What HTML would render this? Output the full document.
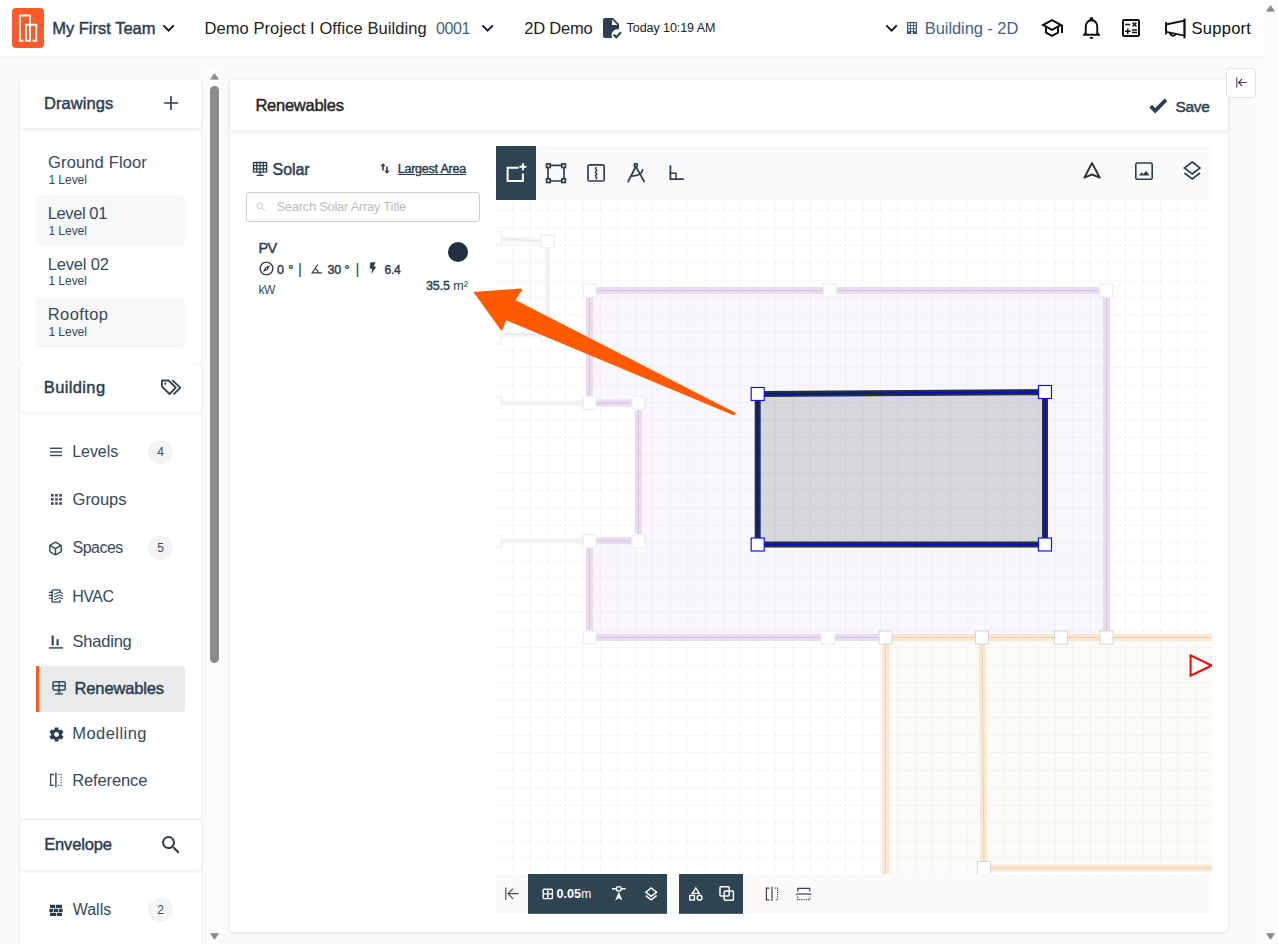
<!DOCTYPE html>
<html>
<head>
<meta charset="utf-8">
<title>Renewables</title>
<style>
*{box-sizing:border-box;margin:0;padding:0}
html,body{width:1278px;height:944px;overflow:hidden;background:#fafafa;font-family:"Liberation Sans",sans-serif;color:#2c3e50}
body{position:relative}
.abs{position:absolute}
.t{position:absolute;white-space:nowrap;line-height:1;font-size:16px;color:#34495e}
.b{font-weight:bold}
svg{position:absolute;display:block;overflow:visible}
/* top bar */
#topbar{position:absolute;left:0;top:0;width:1263px;height:56px;background:#fff;box-shadow:0 1px 2px rgba(0,0,0,.055)}
#logo{position:absolute;left:12px;top:8px;width:32px;height:40px;border-radius:4px;background:#fd5a28}
/* page scrollbar */
#pscroll{position:absolute;left:1263px;top:0;width:15px;height:944px;background:#fcfcfc}
/* sidebar */
.card{position:absolute;background:#fff;border-radius:4px;box-shadow:0 1px 3px rgba(0,0,0,.07)}
.hdr{position:absolute;left:0;width:181px;height:48px;background:#fff;border-radius:4px;box-shadow:0 2px 4px rgba(0,0,0,.08)}
.item{position:absolute;left:16px;width:149px;height:51px;border-radius:4px}
.item.alt{background:#f8f8f8}
.badge{position:absolute;width:25px;height:24px;border-radius:12px;background:#f4f4f4;font-size:12px;line-height:24px;text-align:center;color:#34495e}
</style>
</head>
<body>

<!-- ================= TOP BAR ================= -->
<div id="topbar">
  <div id="logo">
    <svg style="left:0;top:0" width="32" height="40" viewBox="0 0 32 40" fill="none" stroke="#fff" stroke-width="1.9">
      <path d="M11.3 32.8 H7.9 V7.5 H18 V32.8 H14 V16.7 H24.2 V32.8 H20.6"/>
    </svg>
  </div>
  <span class="t" id="tx-team" style="left:52.2px;top:20px;color:#2c3e50;font-size:16.5px;letter-spacing:-0.00px;-webkit-text-stroke-width:0.45px">My First Team</span>
  <svg style="left:162px;top:22px" width="13" height="13" viewBox="0 0 13 13" fill="none" stroke="#141a26" stroke-width="2"><path d="M1.4 3.4 L6.6 8.6 L11.8 3.4"/></svg>

  <span class="t" id="tx-proj" style="left:204.4px;top:20px;color:#222;font-size:16.5px;letter-spacing:0.09px">Demo Project I Office Building</span>
  <span class="t" id="tx-num" style="left:436.0px;top:21px;color:#46627f;font-size:16px;letter-spacing:-0.37px">0001</span>
  <svg style="left:481px;top:22px" width="13" height="13" viewBox="0 0 13 13" fill="none" stroke="#141a26" stroke-width="2"><path d="M1.4 3.4 L6.6 8.6 L11.8 3.4"/></svg>

  <span class="t" id="tx-2d" style="left:524.2px;top:20px;color:#222;font-size:16.5px;letter-spacing:-0.21px">2D Demo</span>
  <svg style="left:598.8px;top:16px" width="24" height="24" viewBox="0 0 24 24"><path fill="#2c3e50" d="M14,2H6A2,2 0 0,0 4,4V20A2,2 0 0,0 6,22H13.2C12.8,21.1 12.6,20.1 12.6,19C12.6,15.7 15.3,13.2 18.6,13.2C19.1,13.2 19.5,13.2 20,13.3V8L14,2M13,9V3.5L18.5,9H13Z"/><path fill="none" stroke="#2c3e50" stroke-width="2.2" d="M14.6 18.6 L17.3 21.2 L22 16.3"/></svg>
  <span class="t" id="tx-today" style="left:626.6px;top:22px;font-size:12.5px;color:#222;letter-spacing:-0.07px">Today 10:19 AM</span>

  <svg style="left:885px;top:22px" width="13" height="13" viewBox="0 0 13 13" fill="none" stroke="#10131c" stroke-width="2"><path d="M1.4 3.4 L6.6 8.6 L11.8 3.4"/></svg>
  <svg style="left:906.9px;top:22px" width="10" height="12" viewBox="0 0 10 12"><rect x="0" y="0" width="10" height="12" fill="#3b5572"/><g fill="#fff"><rect x="1.1" y="1.2" width="2" height="2"/><rect x="4" y="1.2" width="2" height="2"/><rect x="6.9" y="1.2" width="2" height="2"/><rect x="1.1" y="4.2" width="2" height="2"/><rect x="4" y="4.2" width="2" height="2"/><rect x="6.9" y="4.2" width="2" height="2"/><rect x="1.1" y="7.2" width="2" height="2"/><rect x="4" y="7.2" width="2" height="2"/><rect x="6.9" y="7.2" width="2" height="2"/><rect x="4.2" y="10.2" width="1.6" height="1.8"/></g></svg>
  <span class="t" id="tx-bld" style="left:924.8px;top:20px;color:#46627f;font-size:16.5px;letter-spacing:-0.08px">Building - 2D</span>

  <svg style="left:1040px;top:16px" width="24" height="24" viewBox="0 0 24 24"><path fill="#111" d="M12,3L1,9L5,11.18V17.18L12,21L19,17.18V11.18L21,10.09V17H23V9L12,3M18.82,9L12,12.72L5.18,9L12,5.28L18.82,9M17,16L12,18.72L7,16V12.27L12,15L17,12.27V16Z"/></svg>
  <svg style="left:1080px;top:15.3px" width="23" height="25" viewBox="0 0 24 24" preserveAspectRatio="none"><path fill="#111" d="M10,21H14A2,2 0 0,1 12,23A2,2 0 0,1 10,21M21,19V20H3V19L5,17V11C5,7.9 7.03,5.17 10,4.29C10,4.19 10,4.1 10,4A2,2 0 0,1 12,2A2,2 0 0,1 14,4C14,4.1 14,4.19 14,4.29C16.97,5.17 19,7.9 19,11V17L21,19M17,11A5,5 0 0,0 12,6A5,5 0 0,0 7,11V18H17V11Z"/></svg>
  <svg style="left:1119px;top:16px" width="24" height="24" viewBox="0 0 24 24"><path fill="#111" d="M19,3H5A2,2 0 0,0 3,5V19A2,2 0 0,0 5,21H19A2,2 0 0,0 21,19V5A2,2 0 0,0 19,3M19,19H5V5H19V19M6.2,7.7H11.2V9.2H6.2V7.7M13,15.8H18V17.3H13V15.8M13,13.2H18V14.7H13V13.2M8,18H9.5V16H11.5V14.5H9.5V12.5H8V14.5H6V16H8V18M14.1,10.95L15.5,9.54L16.91,10.95L17.97,9.89L16.56,8.47L17.97,7.06L16.91,6L15.5,7.41L14.1,6L13.03,7.06L14.44,8.47L13.03,9.89L14.1,10.95Z"/></svg>
  <svg style="left:1163.6px;top:17.8px" width="23" height="22" viewBox="0 0 23 22" fill="none" stroke="#111" stroke-width="1.8"><path d="M2 6.5 L20.5 2.6 V17.6 L2 13.8 Z"/><path d="M2 4 V16.5"/><path d="M20.5 0.5 V20.5"/><path d="M6 14.8 A3 3 0 0 0 11.8 15.8"/></svg>
  <span class="t" id="tx-sup" style="left:1191.6px;top:20px;color:#111;font-size:16.5px;letter-spacing:0.26px">Support</span>
</div>

<!-- page scrollbar -->
<div id="pscroll">
  <svg style="left:3px;top:5px" width="9" height="7" viewBox="0 0 9 7"><path fill="#8b8b8b" stroke="#8b8b8b" stroke-width="0.8" stroke-linejoin="round" d="M4.5 0.6 L8.4 6.2 H0.6 Z"/></svg>
  <svg style="left:3px;top:933px" width="9" height="7" viewBox="0 0 9 7"><path fill="#8b8b8b" stroke="#8b8b8b" stroke-width="0.8" stroke-linejoin="round" d="M0.6 0.6 H8.4 L4.5 6.4 Z"/></svg>
</div>

<!-- ================= SIDEBAR ================= -->
<div class="card" style="left:20px;top:80px;width:181px;height:284px">
  <div class="hdr" style="top:0"></div>
  <span class="t" id="tx-draw" style="left:24.0px;top:15px;color:#2c3e50;font-size:16.5px;letter-spacing:0.06px;-webkit-text-stroke-width:0.45px">Drawings</span>
  <svg style="left:144px;top:16px" width="14" height="14" viewBox="0 0 14 14" fill="none" stroke="#2c3e50" stroke-width="1.6"><path d="M7 -0.1 V14.1 M-0.1 7 H14.1"/></svg>

  <div class="item" style="top:64px"></div>
  <span class="t" id="tx-gf" style="left:28.0px;top:74px;font-size:16.5px;letter-spacing:0.15px">Ground Floor</span>
  <span class="t s" id="tx-l1" style="left:28.4px;top:94px;font-size:12px;letter-spacing:-0.03px">1 Level</span>
  <div class="item alt" style="top:115px"></div>
  <span class="t" id="tx-lv1" style="left:27.8px;top:125px;font-size:16.5px;letter-spacing:-0.41px">Level 01</span>
  <span class="t s" id="tx-l2" style="left:28.4px;top:145px;font-size:12px;letter-spacing:-0.03px">1 Level</span>
  <div class="item" style="top:166px"></div>
  <span class="t" id="tx-lv2" style="left:27.8px;top:176px;font-size:16.5px;letter-spacing:-0.18px">Level 02</span>
  <span class="t s" id="tx-l3" style="left:28.4px;top:195px;font-size:12px;letter-spacing:-0.03px">1 Level</span>
  <div class="item alt" style="top:217px"></div>
  <span class="t" id="tx-rt" style="left:27.8px;top:226px;font-size:16.5px;letter-spacing:0.39px">Rooftop</span>
  <span class="t s" id="tx-l4" style="left:28.4px;top:246px;font-size:12px;letter-spacing:-0.03px">1 Level</span>
</div>

<div class="card" style="left:20px;top:364px;width:181px;height:455px">
  <div class="hdr" style="top:0"></div>
  <span class="t" id="tx-bldg" style="left:23.8px;top:15px;color:#2c3e50;font-size:16.5px;letter-spacing:0.37px;-webkit-text-stroke-width:0.45px">Building</span>
  <svg style="left:141px;top:14.8px" width="21" height="17" viewBox="0 0 21 17" fill="none" stroke="#2c3e50" stroke-width="1.8" stroke-linejoin="round"><path d="M1 1.5 H7.6 L14.8 8.7 L8.6 15 L1 7.6 Z"/><path d="M11.2 1.2 L19.3 8.7 L12.6 15.4"/><circle cx="4.3" cy="4.7" r="1.1" fill="#2c3e50" stroke="none"/></svg>

  <!-- Levels -->
  <svg style="left:30px;top:83px" width="12" height="10" viewBox="0 0 12 10" fill="#34495e"><rect x="0" y="0.6" width="12" height="1.4"/><rect x="0" y="4.2" width="12" height="1.4"/><rect x="0" y="7.8" width="12" height="1.4"/></svg>
  <span class="t" id="tx-levels" style="left:52.2px;top:80px;font-size:16px;letter-spacing:-0.04px">Levels</span>
  <div class="badge" style="left:128px;top:76px">4</div>
  <!-- Groups -->
  <svg style="left:31px;top:130px" width="11" height="11" viewBox="0 0 11 11" fill="#34495e"><rect x="0" y="0" width="2.6" height="2.6"/><rect x="4.1" y="0" width="2.6" height="2.6"/><rect x="8.2" y="0" width="2.6" height="2.6"/><rect x="0" y="4.1" width="2.6" height="2.6"/><rect x="4.1" y="4.1" width="2.6" height="2.6"/><rect x="8.2" y="4.1" width="2.6" height="2.6"/><rect x="0" y="8.2" width="2.6" height="2.6"/><rect x="4.1" y="8.2" width="2.6" height="2.6"/><rect x="8.2" y="8.2" width="2.6" height="2.6"/></svg>
  <span class="t" id="tx-groups" style="left:52.6px;top:127px;font-size:16.5px;letter-spacing:-0.04px">Groups</span>
  <!-- Spaces -->
  <svg style="left:27.4px;top:175.5px" width="17" height="17" viewBox="0 0 24 24"><path fill="#34495e" d="M21,16.5C21,16.88 20.79,17.21 20.47,17.38L12.57,21.82C12.41,21.94 12.21,22 12,22C11.79,22 11.59,21.94 11.43,21.82L3.53,17.38C3.21,17.21 3,16.88 3,16.5V7.5C3,7.12 3.21,6.79 3.53,6.62L11.43,2.18C11.59,2.06 11.79,2 12,2C12.21,2 12.41,2.06 12.57,2.18L20.47,6.62C20.79,6.79 21,7.12 21,7.5V16.5M12,4.15L6.04,7.5L12,10.85L17.96,7.5L12,4.15M5,15.91L11,19.29V12.58L5,9.21V15.91M19,15.91V9.21L13,12.58V19.29L19,15.91Z"/></svg>
  <span class="t" id="tx-spaces" style="left:52.6px;top:176px;font-size:16px;letter-spacing:-0.54px">Spaces</span>
  <div class="badge" style="left:128px;top:172px">5</div>
  <!-- HVAC -->
  <svg style="left:28px;top:224px" width="16" height="16" viewBox="0 0 16 16" fill="none" stroke="#34495e" stroke-linecap="round"><path d="M12.2 4 V3.1 A1.2 1.2 0 0 0 11 1.9 H5.3 A1.2 1.2 0 0 0 4.1 3.1 V12.9 A1.2 1.2 0 0 0 5.3 14.1 H11 A1.2 1.2 0 0 0 12.2 12.9 V12.2" stroke-width="1.4"/><path d="M1.3 4.4 H4 M1.3 7.4 H4 M1.3 10.3 H4" stroke-width="1.1"/><path d="M6.6 6 C9 5.8 9.6 3.9 11.6 4.2 S13.8 5.4 14.7 5.5 M6.6 8.8 C9 8.6 9.6 6.7 11.6 7 S13.8 8 14.7 8 M6.6 11.6 C9 11.4 9.6 9.5 11.6 9.8 S13.8 10.7 14.7 10.6" stroke-width="1.1"/></svg>
  <span class="t" id="tx-hvac" style="left:52.2px;top:225px;font-size:16px;letter-spacing:-0.50px">HVAC</span>
  <!-- Shading -->
  <svg style="left:28.9px;top:270.6px" width="14" height="14" viewBox="0 0 12 12" fill="#34495e"><rect x="2.2" y="0.5" width="1.9" height="8.5"/><rect x="6.4" y="3.6" width="1.9" height="5.4"/><rect x="0" y="10.4" width="12" height="1.3"/></svg>
  <span class="t" id="tx-shading" style="left:52.6px;top:269px;font-size:16.5px;letter-spacing:-0.23px">Shading</span>
  <!-- Renewables active -->
  <div class="abs" style="left:16px;top:302px;width:149px;height:46px;background:#e9eaec;border-radius:0 4px 4px 0;border-left:3px solid #ff5a1f"></div>
  <svg style="left:32px;top:316px" width="15" height="16" viewBox="0 0 15 16" fill="none" stroke="#34495e"><rect x="1" y="1.7" width="12.2" height="8.2" rx="1.2" stroke-width="1.5"/><path d="M7.1 1.7 V9.9 M1 5.8 H13.2" stroke-width="1.4"/><path d="M6.3 9.9 V13.8 M7.9 9.9 V13.8" stroke-width="1"/><path d="M3.2 14 H11" stroke-width="1.3"/></svg>
  <span class="t" id="tx-renew" style="left:54.6px;top:316px;color:#2c3e50;font-size:16.5px;letter-spacing:-0.16px;-webkit-text-stroke-width:0.45px">Renewables</span>
  <!-- Modelling -->
  <svg style="left:27.6px;top:361.7px" width="17" height="17" viewBox="0 0 24 24"><path fill="#2c3e50" d="M12,15.5A3.5,3.5 0 0,1 8.5,12A3.5,3.5 0 0,1 12,8.5A3.5,3.5 0 0,1 15.5,12A3.5,3.5 0 0,1 12,15.5M19.43,12.97C19.47,12.65 19.5,12.33 19.5,12C19.5,11.67 19.47,11.34 19.43,11L21.54,9.37C21.73,9.22 21.78,8.95 21.66,8.73L19.66,5.27C19.54,5.05 19.27,4.96 19.05,5.05L16.56,6.05C16.04,5.66 15.5,5.32 14.87,5.07L14.5,2.42C14.46,2.18 14.25,2 14,2H10C9.75,2 9.54,2.18 9.5,2.42L9.13,5.07C8.5,5.32 7.96,5.66 7.44,6.05L4.95,5.05C4.73,4.96 4.46,5.05 4.34,5.27L2.34,8.73C2.21,8.95 2.27,9.22 2.46,9.37L4.57,11C4.53,11.34 4.5,11.67 4.5,12C4.5,12.33 4.53,12.65 4.57,12.97L2.46,14.63C2.27,14.78 2.21,15.05 2.34,15.27L4.34,18.73C4.46,18.95 4.73,19.03 4.95,18.95L7.44,17.94C7.96,18.34 8.5,18.68 9.13,18.93L9.5,21.58C9.54,21.82 9.75,22 10,22H14C14.25,22 14.46,21.82 14.5,21.58L14.87,18.93C15.5,18.67 16.04,18.34 16.56,17.94L19.05,18.95C19.27,19.03 19.54,18.95 19.66,18.73L21.66,15.27C21.78,15.05 21.73,14.78 21.54,14.63L19.43,12.97Z"/></svg>
  <span class="t" id="tx-model" style="left:52.2px;top:361px;font-size:16.5px;letter-spacing:0.46px">Modelling</span>
  <!-- Reference -->
  <svg style="left:29px;top:408px" width="14" height="16" viewBox="0 0 14 16" fill="none" stroke="#34495e"><path d="M4.8 2.5 H1.6 V13.4 H4.8" stroke-width="1.3"/><path d="M6.9 0.4 V15.4" stroke-width="1.4"/><path d="M9 2.5 H12.2 V13.4 H9" stroke-width="1.2" stroke-dasharray="1.2 1.5"/></svg>
  <span class="t" id="tx-ref" style="left:52.2px;top:408px;font-size:16.5px;letter-spacing:-0.11px">Reference</span>
</div>

<div class="card" style="left:20px;top:820px;width:181px;height:140px">
  <div class="hdr" style="top:0;height:50px"></div>
  <span class="t" id="tx-env" style="left:24.2px;top:16px;color:#2c3e50;font-size:16.5px;letter-spacing:-0.14px;-webkit-text-stroke-width:0.45px">Envelope</span>
  <svg style="left:139px;top:13px" width="24" height="24" viewBox="0 0 24 24"><path fill="#2c3e50" d="M9.5,3A6.5,6.5 0 0,1 16,9.5C16,11.11 15.41,12.59 14.44,13.73L14.71,14H15.5L20.5,19L19,20.5L14,15.5V14.71L13.73,14.44C12.59,15.41 11.11,16 9.5,16A6.5,6.5 0 0,1 3,9.5A6.5,6.5 0 0,1 9.5,3M9.5,5C7,5 5,7 5,9.5C5,12 7,14 9.5,14C12,14 14,12 14,9.5C14,7 12,5 9.5,5Z"/></svg>
  <svg style="left:28.1px;top:81.8px" width="16" height="16" viewBox="0 0 24 24"><path fill="#2c3e50" d="M3,16H12V21H3V16M2,10H8V15H2V10M9,10H15V15H9V10M16,10H22V15H16V10M13,16H21V21H13V16M3,4H11V9H3V4M12,4H21V9H12V4Z"/></svg>
  <span class="t" id="tx-walls" style="left:52.8px;top:82px;font-size:16px;letter-spacing:-0.04px">Walls</span>
  <div class="badge" style="left:128px;top:78px">2</div>
</div>

<!-- sidebar scrollbar -->
<div class="abs" style="left:207px;top:68px;width:15px;height:876px;background:#fcfcfc">
  <svg style="left:3px;top:5px" width="9" height="7" viewBox="0 0 9 7"><path fill="#8b8b8b" stroke="#8b8b8b" stroke-width="0.8" stroke-linejoin="round" d="M4.5 0.6 L8.4 6.2 H0.6 Z"/></svg>
  <div class="abs" style="left:3px;top:18px;width:9px;height:577px;border-radius:4.5px;background:#8b8b8b"></div>
  <svg style="left:3px;top:865px" width="9" height="7" viewBox="0 0 9 7"><path fill="#8b8b8b" stroke="#8b8b8b" stroke-width="0.8" stroke-linejoin="round" d="M0.6 0.6 H8.4 L4.5 6.4 Z"/></svg>
</div>


<!-- ================= MAIN CARD ================= -->
<div class="card" id="main" style="left:230px;top:80px;width:998px;height:852px;box-shadow:0 1px 4px rgba(0,0,0,.10)">
  <div class="abs" style="left:0;top:0;width:998px;height:50px;background:#fff;border-radius:4px 4px 0 0;box-shadow:0 2px 4px rgba(0,0,0,.08)"></div>
  <span class="t" id="tx-title" style="left:25.4px;top:17px;font-size:16.5px;color:#262626;letter-spacing:-0.25px;-webkit-text-stroke-width:0.45px">Renewables</span>
  <svg style="left:919.3px;top:17.7px" width="19" height="16" viewBox="0 0 19 16"><path fill="#2c3e50" d="M6.2 15.4 L0.3 9.5 L3 6.8 L6.2 10 L15.6 0.6 L18.3 3.3 Z"/></svg>
  <span class="t" id="tx-save" style="left:945.6px;top:19px;color:#2c3e50;font-size:15.5px;letter-spacing:-0.36px;-webkit-text-stroke-width:0.45px">Save</span>

  <!-- Solar header -->
  <svg style="left:22px;top:81px" width="16" height="16" viewBox="0 0 16 16" fill="none" stroke="#2c3e50" stroke-width="1.4"><rect x="1.5" y="1.5" width="13.1" height="9.6" rx="0.6"/><path d="M4.8 1.5 V11.1 M8.05 1.5 V14.4 M11.3 1.5 V11.1 M1.5 4.7 H14.6 M1.5 7.9 H14.6 M4.6 14.4 H11.6" stroke-width="1.25"/></svg>
  <span class="t" id="tx-solar" style="left:42.6px;top:82px;font-size:16px;color:#2c3e50;letter-spacing:-0.10px;-webkit-text-stroke-width:0.45px">Solar</span>
  <svg style="left:150px;top:83px" width="10" height="11" viewBox="0 0 10 11"><path fill="#2c3e50" d="M3 0.3 L0.3 3.3 H2.2 V7.4 H3.8 V3.3 H5.7 Z M7 10.7 L9.7 7.7 H7.8 V3.6 H6.2 V7.7 H4.3 Z"/></svg>
  <span class="t" id="tx-largest" style="left:167.7px;top:83px;font-size:12.5px;color:#2c3e50;text-decoration:underline;letter-spacing:-0.22px;-webkit-text-stroke-width:0.45px">Largest Area</span>

  <!-- search -->
  <div class="abs" style="left:16px;top:112px;width:234px;height:30px;border:1px solid #d0d0d0;border-radius:3px;background:#fff"></div>
  <svg style="left:25px;top:121px" width="12" height="12" viewBox="0 0 24 24"><path fill="#cfcfcf" d="M9.5,3A6.5,6.5 0 0,1 16,9.5C16,11.11 15.41,12.59 14.44,13.73L14.71,14H15.5L20.5,19L19,20.5L14,15.5V14.71L13.73,14.44C12.59,15.41 11.11,16 9.5,16A6.5,6.5 0 0,1 3,9.5A6.5,6.5 0 0,1 9.5,3M9.5,5C7,5 5,7 5,9.5C5,12 7,14 9.5,14C12,14 14,12 14,9.5C14,7 12,5 9.5,5Z"/></svg>
  <span class="t" id="tx-search" style="left:46.4px;top:120px;font-size:13px;color:#bdbdbd;letter-spacing:-0.29px">Search Solar Array Title</span>

  <!-- PV item -->
  <span class="t" id="tx-pv" style="left:28.6px;top:161px;font-size:14.5px;color:#2c3e50;letter-spacing:-0.8px;-webkit-text-stroke-width:0.45px">PV</span>
  <div class="abs" style="left:218px;top:162px;width:20px;height:20px;border-radius:10px;background:#222f3e"></div>
  <svg style="left:27.5px;top:180.2px" width="17" height="17" viewBox="0 0 24 24"><path fill="#2c3e50" d="M7,17L10.2,10.2L17,7L13.8,13.8L7,17M12,11.1A0.9,0.9 0 0,0 11.1,12A0.9,0.9 0 0,0 12,12.9A0.9,0.9 0 0,0 12.9,12A0.9,0.9 0 0,0 12,11.1M12,2A10,10 0 0,1 22,12A10,10 0 0,1 12,22A10,10 0 0,1 2,12A10,10 0 0,1 12,2M12,4A8,8 0 0,0 4,12A8,8 0 0,0 12,20A8,8 0 0,0 20,12A8,8 0 0,0 12,4Z"/></svg>
  <span class="t" id="tx-deg0" style="left:47.0px;top:184px;font-size:12.5px;color:#2c3e50;letter-spacing:0.40px;-webkit-text-stroke-width:0.45px">0 °</span>
  <span class="t" id="tx-bar1" style="left:68px;top:181px;font-size:15px;color:#2c3e50">|</span>
  <svg style="left:80.6px;top:183.6px" width="11.6" height="10" viewBox="0 0 13 12" preserveAspectRatio="none" fill="none" stroke="#2c3e50" stroke-width="1.3"><path d="M7.6 0.8 L1.2 10.6 H12.2"/><path d="M4.6 5.6 A5 5 0 0 1 8 10.4"/></svg>
  <span class="t" id="tx-deg30" style="left:97.6px;top:184px;font-size:12.5px;color:#2c3e50;letter-spacing:-0.19px;-webkit-text-stroke-width:0.45px">30 °</span>
  <span class="t" id="tx-bar2" style="left:125.5px;top:181px;font-size:15px;color:#2c3e50">|</span>
  <svg style="left:139.4px;top:181.6px" width="8" height="12.4" viewBox="0 0 9 14" preserveAspectRatio="none"><path fill="#2c3e50" d="M1.6 0.3 H7.4 L5.2 5.2 H8.4 L2.6 13.6 L3.6 7.6 H0.8 Z"/></svg>
  <span class="t" id="tx-64" style="left:154.4px;top:184px;font-size:12px;color:#2c3e50;letter-spacing:-0.15px;-webkit-text-stroke-width:0.45px">6.4</span>
  <span class="t" id="tx-kw" style="left:28.6px;top:204px;font-size:12px;color:#34495e;letter-spacing:-0.7px">kW</span>
  <span class="t" id="tx-area" style="left:196.0px;top:200px;font-size:12.5px;color:#2c3e50;letter-spacing:-0.09px"><span style="-webkit-text-stroke-width:0.4px">35.5</span> m²</span>

  <!-- ============ CANVAS (offset: main card at 230,80 → canvas at 496,146) ============ -->
  <div class="abs" id="cv" style="left:266px;top:66px;width:716px;height:768px;background:#fff;overflow:hidden">
    <svg style="left:0;top:0" width="716" height="768" viewBox="496 146 716 768">
      <defs>
        <pattern id="grid" x="494.9" y="192.15" width="17.5" height="17.5" patternUnits="userSpaceOnUse">
          <path d="M0 0 H17.5 M0 0 V17.5" fill="none" stroke="#000" stroke-opacity="0.036" stroke-width="1.8"/>
        </pattern>
      </defs>
      <rect x="496" y="146" width="716" height="768" fill="#fff"/>
      <!-- fills -->
      <path d="M589.5 290.5 H1106.5 V637.5 H589.4 V540.8 H638.4 V403 H589.4 Z" fill="#faf7fc"/>
      <path d="M885.5 637.5 H1212 V868 H984 V874 H885.5 Z" fill="#fdfbf7"/>
      <path d="M496 238.3 L547.5 241.5 V334.5 H496 Z" fill="#fcfdfc"/>
      <rect x="496" y="200" width="716" height="674" fill="url(#grid)"/>

      <!-- faint grey shapes on left -->
      <g fill="none" stroke="#f5f7f6" stroke-width="6">
        <path d="M496 238.3 L547.5 241.5 V334.5 H496"/>
        <path d="M496 403 H589.4"/>
        <path d="M496 541 H589.4"/>
      </g>
      <g fill="none" stroke="#e2e7e4" stroke-width="1">
        <path d="M496 238.3 L547.5 241.5 V334.5 H496"/>
        <path d="M496 403 H589.4"/>
        <path d="M496 541 H589.4"/>
      </g>
      <g fill="#fff" stroke="#f1f1f1" stroke-width="1.5">
        <rect x="488.5" y="231.5" width="13" height="13"/>
        <rect x="541" y="235" width="13" height="13"/>
        <rect x="541" y="328" width="13" height="13"/>
        <rect x="488.5" y="331" width="13" height="13"/>
        <rect x="488.5" y="396.5" width="13" height="13"/>
        <rect x="488.5" y="534.5" width="13" height="13"/>
      </g>

      <!-- purple walls -->
      <g fill="none" stroke="#e9dcf0" stroke-width="7" stroke-linejoin="miter">
        <path d="M589.5 290.5 H1106.5 V637.5 M885 637.5 H589.5 V540.8 H638.4 V403 H589.5 V290.5"/>
      </g>
      <g fill="none" stroke="#d4c6dc" stroke-width="1">
        <path d="M589.5 290.5 H1106.5 V637.5 M885 637.5 H589.5 V540.8 H638.4 V403 H589.5 V290.5"/>
      </g>
      <!-- orange walls -->
      <g fill="none" stroke="#fce8d0" stroke-width="7">
        <path d="M885.5 637.5 H1212 M885.5 637.5 V874 M982 637.5 L984 868 H1212"/>
      </g>
      <g fill="none" stroke="#e4d3bc" stroke-width="1">
        <path d="M885.5 637.5 H1212 M885.5 637.5 V874 M982 637.5 L984 868 H1212"/>
      </g>
      <!-- wall handles -->
      <g fill="#fff" stroke="#f0f0f0" stroke-width="1.5">
        <rect x="583" y="284" width="13" height="13"/>
        <rect x="823.5" y="284" width="13" height="13"/>
        <rect x="1100" y="284" width="13" height="13"/>
        <rect x="583" y="396.5" width="13" height="13"/>
        <rect x="632" y="396.5" width="13" height="13"/>
        <rect x="583" y="534.5" width="13" height="13"/>
        <rect x="632" y="534.5" width="13" height="13"/>
        <rect x="583" y="631" width="13" height="13"/>
        <rect x="821.5" y="631" width="13" height="13"/>
      </g>
      <g fill="#fff" stroke="#d6d6da" stroke-width="1">
        <rect x="879" y="631" width="13" height="13"/>
        <rect x="975.5" y="631" width="13" height="13"/>
        <rect x="1054.5" y="631" width="13" height="13"/>
        <rect x="1100" y="631" width="13" height="13"/>
        <rect x="977.5" y="861.5" width="13" height="13"/>
      </g>

      <!-- selected solar array -->
      <path d="M757.7 394 L1045 392 L1045 544.5 L757.7 544.5 Z" fill="#222f3e" fill-opacity="0.155" stroke="#222f3e" stroke-width="6" stroke-linejoin="miter"/>
      <path d="M757.7 394 L1045 392 L1045 544.5 L757.7 544.5 Z" fill="none" stroke="#0808d2" stroke-width="1.6"/>
      <g fill="#fff" stroke="#1414e6" stroke-width="1.2">
        <rect x="751.2" y="387.5" width="13" height="13"/>
        <rect x="1038.5" y="385.5" width="13" height="13"/>
        <rect x="751.2" y="538" width="13" height="13"/>
        <rect x="1038.5" y="538" width="13" height="13"/>
      </g>

      <!-- red marker -->
      <path d="M1190.6 655.4 L1211.6 665.5 L1190.6 675.7 Z" fill="#fff" stroke="#f00" stroke-width="2" stroke-linejoin="miter"/>

      <!-- top toolbar -->
      <rect x="496" y="146" width="716" height="54" fill="#fafafa"/>
      <rect x="496" y="146" width="40" height="54" fill="#2e4453"/>
      <!-- bottom toolbar -->
      <rect x="496" y="874" width="716" height="40" fill="#fafafa"/>
      <rect x="528" y="874" width="139" height="39.8" fill="#2e4453"/>
      <rect x="679" y="874" width="64" height="39.8" fill="#2e4453"/>

      <!-- top toolbar icons -->
      <g fill="none" stroke="#fff" stroke-width="2">
        <path d="M518.5 167.7 H507.6 V181 H522.9 V173.5"/>
        <path d="M522.9 163.3 V170.3 M519.4 166.8 H526.4"/>
      </g>
      <g fill="none" stroke="#2c3e50" stroke-width="1.7">
        <path d="M550 165.3 H562 M550 181 H562 M548 167.3 V179 M564 167.3 V179"/>
        <rect x="546.6" y="163.9" width="3.6" height="3.6"/><rect x="561.8" y="163.9" width="3.6" height="3.6"/>
        <rect x="546.6" y="178.9" width="3.6" height="3.6"/><rect x="561.8" y="178.9" width="3.6" height="3.6"/>
      </g>
      <g fill="none" stroke="#2c3e50" stroke-width="1.7">
        <rect x="588" y="164.8" width="16.2" height="16.2" rx="1.6"/>
        <path d="M596.5 167 L595.5 168.8 L596.8 170.6 L595.5 172.4 L596.8 174.2 L595.5 176 L596.8 177.8 L596 179.3" stroke-width="1.4"/>
      </g>
      <g fill="none" stroke="#2c3e50" stroke-width="1.7" stroke-linecap="round">
        <path d="M635.8 166.5 L628.2 181.5 M635.8 166.5 L644.2 181.5"/>
        <circle cx="635.8" cy="165.2" r="1.6"/>
        <path d="M642.6 169.8 Q641.5 175.5 631.8 176.2"/>
      </g>
      <g fill="none" stroke="#2c3e50" stroke-width="1.8">
        <path d="M670.4 165.2 V179.2 H683.8"/>
        <path d="M670.4 173.2 H676 V179.2" stroke-width="1.5"/>
      </g>
      <!-- right icons -->
      <path d="M1092 163 L1084.4 177.7 L1092 174.5 L1099.8 177.7 Z" fill="none" stroke="#333" stroke-width="1.9" stroke-linejoin="round"/>
      <g>
        <rect x="1135.8" y="163" width="16.4" height="16.2" rx="1.4" fill="none" stroke="#2c3e50" stroke-width="1.6"/>
        <path d="M1139 175.6 L1141.6 172.2 L1143.4 174.2 L1146 170.8 L1149.6 175.6 Z" fill="#2c3e50"/>
      </g>
      <g fill="none" stroke="#2c3e50" stroke-width="1.6" stroke-linejoin="miter">
        <path d="M1192.2 162 L1200 168 L1192.2 174 L1184.4 168 Z"/>
        <path d="M1184.4 173 L1192.2 179 L1200 173"/>
      </g>
      <!-- bottom toolbar icons -->
      <g fill="none" stroke="#4a4a5a" stroke-width="1.2">
        <path d="M505.8 887.4 V900 M508 893.7 H518.6 M513 888.6 L508 893.7 L513 898.8"/>
      </g>
      <g fill="none" stroke="#fff" stroke-width="1.4">
        <rect x="543.2" y="889.2" width="9.2" height="9.4" rx="0.8"/>
        <path d="M547.8 889.2 V898.6 M543.2 893.9 H552.4"/>
      </g>
      <g fill="#fff">
        <rect x="612" y="888" width="13.6" height="1.6"/>
        <rect x="616.6" y="886.9" width="4.4" height="4" rx="0.5" fill="#2e4453" stroke="#fff" stroke-width="1.2"/>
        <path d="M618.8 891.5 L622.4 900.4 L618.8 898.3 L615.2 900.4 Z"/>
      </g>
      <g fill="none" stroke="#fff" stroke-width="1.5">
        <path d="M651.2 888 L656.6 892.2 L651.2 896.4 L645.8 892.2 Z"/>
        <path d="M645.8 895.6 L651.2 899.8 L656.6 895.6"/>
      </g>
      <g fill="none" stroke="#fff" stroke-width="1.4">
        <path d="M695.8 888 L699.2 893.4 H692.4 Z"/>
        <rect x="689.8" y="895.4" width="4.6" height="4.6"/>
        <circle cx="699.6" cy="897.7" r="2.4"/>
      </g>
      <g fill="none" stroke="#fff" stroke-width="1.5">
        <rect x="720" y="886.8" width="9.2" height="9.2" rx="1"/>
        <rect x="724.2" y="891" width="9.2" height="9.2" rx="1"/>
      </g>
      <g fill="none" stroke="#3a4250" stroke-width="1.2">
        <path d="M769.4 888.2 H766.4 V899.8 H769.4"/>
        <path d="M772 886.8 V901"/>
        <path d="M774.6 888.2 H777.6 V899.8 H774.6" stroke-dasharray="1.1 1.1"/>
      </g>
      <g fill="none" stroke="#3a4250" stroke-width="1.2">
        <path d="M797.8 891.4 V888.4 H809.8 V891.4"/>
        <path d="M796.2 894 H811.4"/>
        <path d="M797.8 896.6 V899.6 H809.8 V896.6" stroke-dasharray="1.1 1.1"/>
      </g>
      <text x="556.4" y="897.8" font-family="Liberation Sans, sans-serif" font-size="13.5" font-weight="bold" fill="#fff" id="tx-005" textLength="24.5" lengthAdjust="spacingAndGlyphs">0.05</text>
      <text x="581.2" y="897.8" font-family="Liberation Sans, sans-serif" font-size="13.5" fill="#fff" textLength="10" lengthAdjust="spacingAndGlyphs">m</text>

    </svg>
  </div>
  <!-- orange annotation arrow, drawn above everything -->
  <svg style="left:0;top:0" width="998" height="851" viewBox="230 80 998 851">
    <path d="M473.4 292 L520.5 288.6 Q523 289 521.5 291 L515.5 300 L735 412.6 Q736.5 414.5 733.5 415.2 L506 320.2 L503 329 Q502 331 500.5 329.5 Z" fill="#ff5a00"/>
  </svg>

</div>

<!-- collapse button -->
<div class="abs" style="left:1226px;top:68px;width:30px;height:30px;background:#fff;border:1px solid #e2e2e2;border-radius:4px"></div>
<svg style="left:1236px;top:77px" width="11" height="11" viewBox="0 0 11 11" fill="none" stroke="#4a3550" stroke-width="1.1"><path d="M0.8 0.5 V10.5 M2.6 5.5 H10.6 M6 2 L2.6 5.5 L6 9"/></svg>


</body>
</html>
